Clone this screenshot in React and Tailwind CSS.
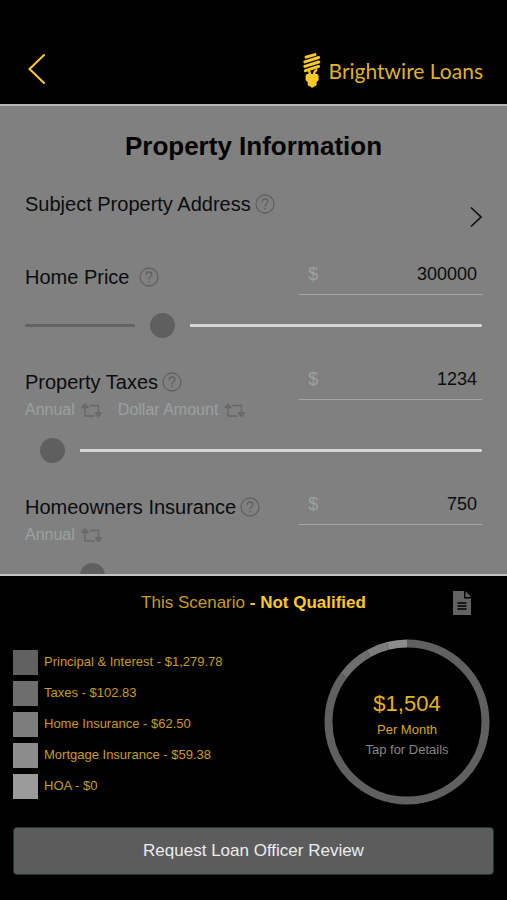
import React, { useState } from 'react';

const payments = [
  { label: 'Principal & Interest', text: '$1,279.78', amount: 1279.78, swatch: 'bg-[#606060]', stroke: 'stroke-[#606060]' },
  { label: 'Taxes', text: '$102.83', amount: 102.83, swatch: 'bg-[#6e6e6e]', stroke: 'stroke-[#6e6e6e]' },
  { label: 'Home Insurance', text: '$62.50', amount: 62.5, swatch: 'bg-[#7d7d7d]', stroke: 'stroke-[#7d7d7d]' },
  { label: 'Mortgage Insurance', text: '$59.38', amount: 59.38, swatch: 'bg-[#8c8c8c]', stroke: 'stroke-[#8c8c8c]' },
  { label: 'HOA', text: '$0', amount: 0, swatch: 'bg-[#9b9b9b]', stroke: 'stroke-[#9b9b9b]' },
];

const BulbIcon = () => (
  <svg width="18" height="36" viewBox="0 0 18 36" fill="none" aria-hidden="true">
    <g stroke="#fdc927" strokeWidth="2.9" strokeLinecap="round">
      <path d="M3 4.200 12 1.600" />
      <path d="M1.800 8.900 15.600 4.500" />
      <path d="M1.800 13.400 15.800 9" />
      <path d="M2.400 17.700 15.600 13.500" />
      <path d="M6 17.200 7.200 22" strokeWidth="2.400" />
      <path d="M13.400 17.200C11.400 18 11 19.600 11 22" strokeWidth="2.200" />
    </g>
    <path d="M3.800 21h10.400l1.400 1.600v4.400l-2 2.200v2.700l-1.400 1.400h-.9l-.9 1.200H8l-.9-1.200h-.9L4.700 31.900v-2.700L2.600 27v-4.400z" fill="#fdc927" />
  </svg>
);

const HelpButton = ({ topic }) => (
  <button aria-label={`Help: ${topic}`} className="shrink-0">
    <svg width="20" height="20" viewBox="0 0 20 20" fill="none" stroke="#616161" strokeWidth="1.3" strokeLinecap="round">
      <circle cx="10" cy="10" r="9" />
      <path d="M7.200 7.800c0-1.700 1.200-2.800 2.800-2.800s2.800 1 2.800 2.500c0 2.100-2.800 2.200-2.800 4.500" />
      <path d="M10 14.600v.2" strokeWidth="1.600" />
    </svg>
  </button>
);

const ToggleButton = ({ children }) => (
  <button className="flex items-center gap-1.5 text-base leading-5 text-[#9ba0a1]">
    {children}
    <svg width="21" height="15" viewBox="0 0 21 15" fill="none" stroke="#666666" strokeWidth="1.3" strokeLinejoin="round">
      <path d="M4 1 7 4.500H1z" />
      <path d="M4 4.500V13H13.500" />
      <path d="M8.500 2.500H17.500V10" />
      <path d="M17.500 13.500 14.500 10H20.300z" />
    </svg>
  </button>
);

const Slider = ({ label, value, max, onChange }) => {
  const ratio = Math.min(value / max, 1);
  return (
    <input
      type="range"
      aria-label={label}
      min="0"
      max={max}
      value={value}
      onChange={(e) => onChange(Number(e.target.value))}
      style={{ '--stop': `calc(27px + (100% - 55px) * ${ratio})` }}
      className="block h-[25px] w-full appearance-none bg-transparent [&::-webkit-slider-runnable-track]:h-[3px] [&::-webkit-slider-runnable-track]:rounded-full [&::-webkit-slider-runnable-track]:bg-[linear-gradient(to_right,#636363_var(--stop),#d6d6d6_var(--stop))] [&::-webkit-slider-thumb]:-mt-[11px] [&::-webkit-slider-thumb]:h-[25px] [&::-webkit-slider-thumb]:w-[55px] [&::-webkit-slider-thumb]:appearance-none [&::-webkit-slider-thumb]:bg-[radial-gradient(circle,#5f5f5f_12px,#808080_13px)]"
    />
  );
};

const AmountField = ({ id, label, max, initial, toggles = [], wide }) => {
  const [value, setValue] = useState(initial);
  return (
    <div className="mb-6">
      <div className="flex justify-between">
        <div className="pt-1.5">
          <div className={`flex items-center ${wide ? 'gap-2.5' : 'gap-1'}`}>
            <label htmlFor={id} className="text-xl leading-7 text-[#0c0c0c]">{label}</label>
            <HelpButton topic={label} />
          </div>
          {toggles.length > 0 && (
            <div className="flex gap-4 pt-1">
              {toggles.map((t) => (
                <ToggleButton key={t}>{t}</ToggleButton>
              ))}
            </div>
          )}
        </div>
        <div className="flex h-[38px] w-[40%] items-center border-b border-[#a0a8a8] px-[5px] pb-1 text-lg">
          <span className="pl-1 text-[#9ba0a1]">$</span>
          <input
            id={id}
            type="text"
            inputMode="numeric"
            value={value}
            onChange={(e) => setValue(Number(e.target.value.replace(/\D/g, '')))}
            className="w-full min-w-0 bg-transparent text-right text-[#0c0c0c] outline-none"
          />
        </div>
      </div>
      <div className="pt-[18px]">
        <Slider label={label} value={value} max={max} onChange={setValue} />
      </div>
    </div>
  );
};

const PaymentRing = () => {
  const total = payments.reduce((sum, p) => sum + p.amount, 0);
  let used = 0;
  return (
    <button className="relative h-[166px] w-[166px] shrink-0">
      <svg viewBox="0 0 166 166" fill="none" className="h-full w-full -rotate-90" aria-hidden="true">
        {payments.map((p) => {
          const share = (p.amount / total) * 100;
          const offset = -used;
          used += share;
          return share > 0 && (
            <circle
              key={p.label}
              cx="83"
              cy="83"
              r="78.500"
              pathLength="100"
              strokeWidth="8"
              strokeDasharray={`${share} ${100 - share}`}
              strokeDashoffset={offset}
              className={p.stroke}
            />
          );
        })}
      </svg>
      <span className="absolute inset-0 flex flex-col items-center justify-center pt-1">
        <span className="text-[22px] leading-8 text-[#e5b31c]">$1,504</span>
        <span className="text-[13px] leading-5 text-[#d6a71c]">Per Month</span>
        <span className="text-[13px] leading-5 text-[#858585]">Tap for Details</span>
      </span>
    </button>
  );
};

const App = () => {
  return (
    <div className="flex h-screen flex-col bg-black font-['Liberation_Sans',Arial,sans-serif]">
      <header className="flex shrink-0 items-center justify-between border-b-2 border-[#b5b5b5] pt-[41px] pr-6 pb-[7px] pl-7">
        <button aria-label="Back" className="py-3">
          <svg width="18" height="32" viewBox="0 0 18 32" fill="none" stroke="#fdc927" strokeWidth="2" strokeLinecap="round">
            <path d="M16 2 1.500 16 16 30" />
          </svg>
        </button>
        <div className="flex items-center gap-2 pt-1">
          <BulbIcon />
          <span className="font-['Lato',sans-serif] text-[21px] leading-7 text-[#dfb32a]">Brightwire Loans</span>
        </div>
      </header>

      <main className="min-h-0 flex-1 overflow-y-auto bg-[#808080] px-[25px] pt-6 [scrollbar-width:none]">
        <h1 className="text-center text-[26px] leading-8 font-bold text-black">Property Information</h1>

        <div className="mt-7 mb-[29px] flex justify-between">
          <div className="flex items-center gap-1 self-start">
            <span className="text-xl leading-7 text-[#0c0c0c]">Subject Property Address</span>
            <HelpButton topic="Subject Property Address" />
          </div>
          <button aria-label="Edit address" className="pt-4">
            <svg width="12" height="22" viewBox="0 0 12 22" fill="none" stroke="#111111" strokeWidth="1.700" strokeLinecap="round">
              <path d="M1.500 2 11 11 1.500 20" />
            </svg>
          </button>
        </div>

        {/* Amounts */}
        <AmountField id="home-price" label="Home Price" initial={300000} max={1100000} wide />
        <AmountField id="taxes" label="Property Taxes" initial={1234} max={1000000} toggles={['Annual', 'Dollar Amount']} />
        <AmountField id="insurance" label="Homeowners Insurance" initial={750} max={7500} toggles={['Annual']} />
      </main>

      <footer className="shrink-0 border-t-2 border-[#c4c4c4] px-[13px] pb-[25px]">
        <div className="flex h-[54px] items-center">
          <div className="w-16"></div>
          <p className="flex-1 text-center text-[17px] text-[#c79c1e]">
            This Scenario <b className="text-[#fdc927]">- Not Qualified</b>
          </p>
          <button aria-label="Scenario report" className="flex w-16 justify-center">
            <svg width="18" height="24" viewBox="0 0 18 24" aria-hidden="true">
              <path d="M0 0H11V7.500H18V24H0z" fill="#636363" />
              <path d="M12.500 0 18 6H12.500z" fill="#636363" />
              <path d="M4.500 12h9M4.500 15h9M4.500 18h9" stroke="#000000" strokeWidth="1.700" />
            </svg>
          </button>
        </div>

        <div className="flex items-center justify-between pt-[9px] pr-1">
          <ul className="flex flex-col gap-1.5 pt-1">
            {payments.map((p) => (
              <li key={p.label} className="flex items-center gap-1.5 text-[13px] text-[#c79c1e]">
                <span className={`h-[25px] w-[25px] ${p.swatch}`}></span>
                <span>{p.label} - {p.text}</span>
              </li>
            ))}
          </ul>
          <PaymentRing />
        </div>

        <button className="mt-[22px] h-12 w-full rounded border border-[#203828] bg-[#5c5c5c] text-[17px] text-[#ececec]">
          Request Loan Officer Review
        </button>
      </footer>
    </div>
  );
};

export default App;
